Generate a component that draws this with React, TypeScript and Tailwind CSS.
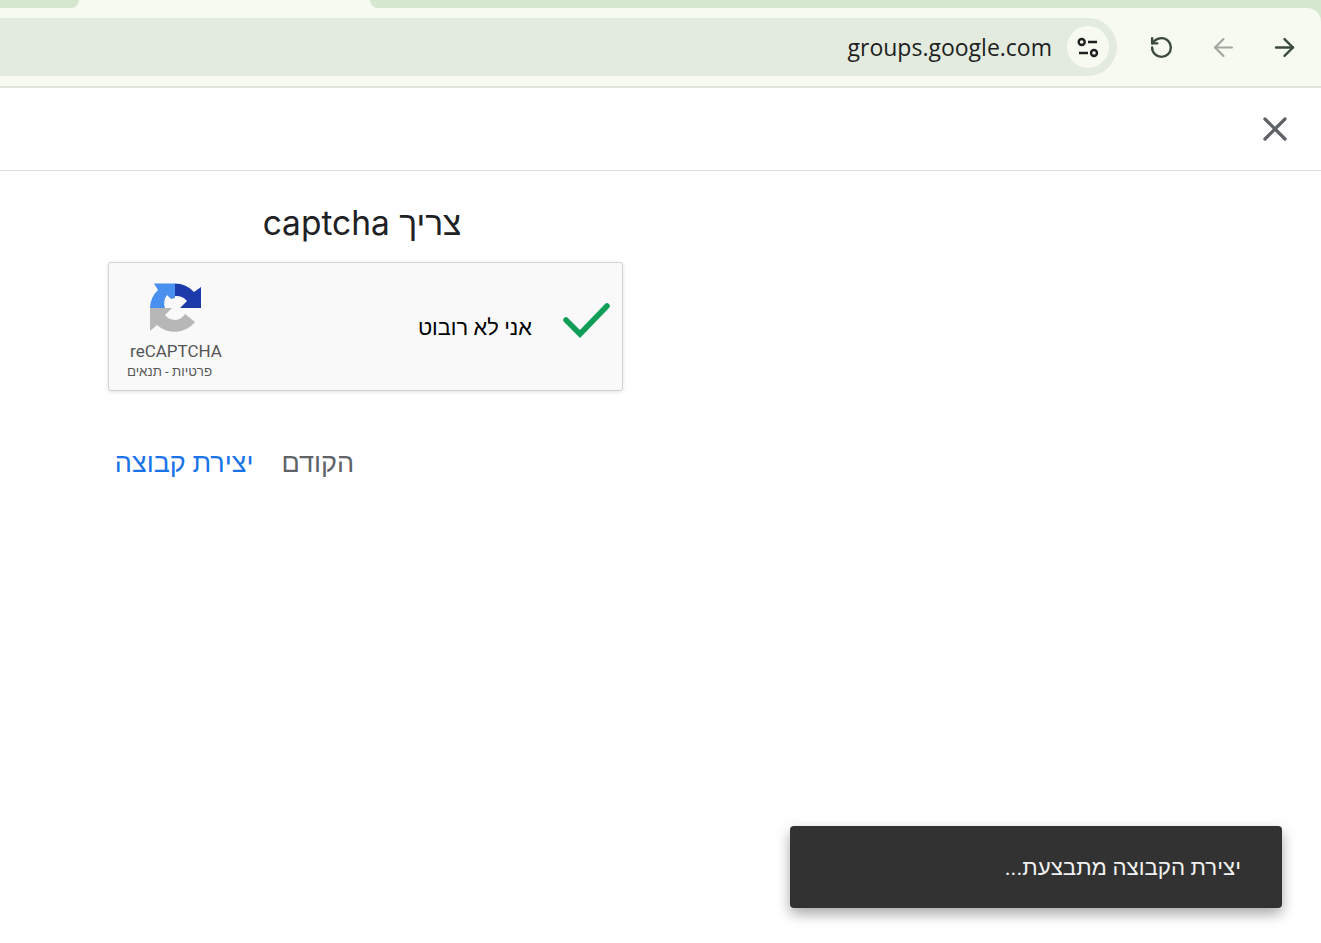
import { ArrowLeft, ArrowRight, RotateCcw, X } from 'lucide-react'

function RecaptchaLogo() {
  return (
    <svg width="62" height="62" viewBox="0 0 62 62" className="block">
      <path d="M5 30A25.500 25.500 0 0 1 13 12L9 5.500H30V20L26 21L22 17A14 14 0 0 0 20 30Z" fill="#4a90f0" />
      <path d="M30 5.500A25.500 25.500 0 0 1 49 14L56 9V30H35L42 23A14 14 0 0 0 30 18Z" fill="#1c3aa9" />
      <path d="M5 30H27L20 37A12 12 0 0 0 40 36L50 44A26 26 0 0 1 12 47L5 53Z" fill="#b7b7b7" />
    </svg>
  )
}

function TuneIcon() {
  return (
    <svg width="26" height="26" viewBox="0 0 26 26" fill="none" stroke="#1f1f1f" strokeWidth="2.400">
      <circle cx="6.700" cy="8" r="3" />
      <circle cx="19" cy="19" r="3" />
      <path d="M13 8H22M4 19H13" />
    </svg>
  )
}

export default function App() {
  return (
    <div className="relative h-[943px] w-[1321px] overflow-hidden bg-white font-['Roboto',sans-serif]">
      <div className="bg-[#d5e7cf]">
        <div className="flex h-2 bg-[#f6faf0]">
          <div className="w-[79px] rounded-br-[14px] bg-[#d5e7cf]" />
          <div className="flex-1" />
          <div className="w-[951px] rounded-bl-[14px] bg-[#d5e7cf]" />
        </div>

        <div className="flex h-[80px] items-start rounded-tr-[14px] border-b-2 border-[#dfe5d8] bg-[#f6faf0] pr-[6px] pt-[10px]">
          <div className="flex h-[58px] flex-1 items-center justify-end rounded-r-full bg-[#e3ebdf] pr-2">
            <span className="mr-[15px] font-['Open_Sans',sans-serif] text-[23px] text-[#1f1f1f]">groups.google.com</span>
            <span className="flex h-[42px] w-[42px] items-center justify-center rounded-full bg-[#f6faf0]">
              <TuneIcon />
            </span>
          </div>
          <div className="ml-[13px] flex h-[58px] items-center">
            <span className="flex w-[62px] justify-center"><RotateCcw size={25} strokeWidth={2.300} color="#3c4a3c" /></span>
            <span className="flex w-[62px] justify-center"><ArrowLeft size={29} strokeWidth={1.800} color="#a2a8a0" /></span>
            <span className="flex w-[61px] justify-center"><ArrowRight size={29} strokeWidth={2} color="#3c4a3c" /></span>
          </div>
        </div>
      </div>

      <div className="flex h-[83px] items-center justify-end border-b border-[#dcdcdc] pr-[26px]">
        <X size={40} strokeWidth={2} color="#5f6368" />
      </div>

      <div dir="rtl" className="ml-[108px] w-[515px] pt-[30px]">
        <h1 className="mb-[16px] pr-[7px] text-center font-['Inter',sans-serif] text-[33.500px] leading-[45px] font-normal text-[#202124]">
          צריך captcha
        </h1>

        <div className="flex h-[129px] items-center justify-between rounded-[3px] border border-[#d3d3d3] bg-[#f9f9f9] pr-[10px] pl-[18px] shadow-[0_1px_4px_rgba(0,0,0,0.12)]">
          <div className="flex items-center">
            <svg width="50" height="40" viewBox="0 0 50 40" className="mb-[10px] ml-[30px] block">
              <path d="M4 18L18 32L45 4" fill="none" stroke="#0f9d58" strokeWidth="5.500" strokeLinecap="round" />
            </svg>
            <span className="mt-[4px] text-[21.800px] text-black">אני לא רובוט</span>
          </div>
          <div className="mt-[6px] -ml-[1px] flex w-[100px] flex-col items-center">
            <RecaptchaLogo />
            <span dir="ltr" className="mt-[1px] text-[17px] leading-5 text-[#555555]">reCAPTCHA</span>
            <span className="mt-[1px] mr-[13px] whitespace-nowrap text-[13.300px] leading-5 text-[#555555]">פרטיות - תנאים</span>
          </div>
        </div>

        <div className="mt-[52px] flex gap-7 pr-[269px] text-[27px] leading-10 font-medium">
          <span className="text-[#5f6368]">הקודם</span>
          <span className="whitespace-nowrap text-[#1a73e8]">יצירת קבוצה</span>
        </div>
      </div>

      <div dir="rtl" className="absolute top-[826px] left-[790px] flex h-[82px] w-[492px] items-center rounded-[4px] bg-[#323232] pt-[2px] pr-[41px] text-[22.300px] text-[#f1f1f1] shadow-[0_6px_14px_rgba(0,0,0,0.35)]">
        יצירת הקבוצה מתבצעת...
      </div>
    </div>
  )
}
